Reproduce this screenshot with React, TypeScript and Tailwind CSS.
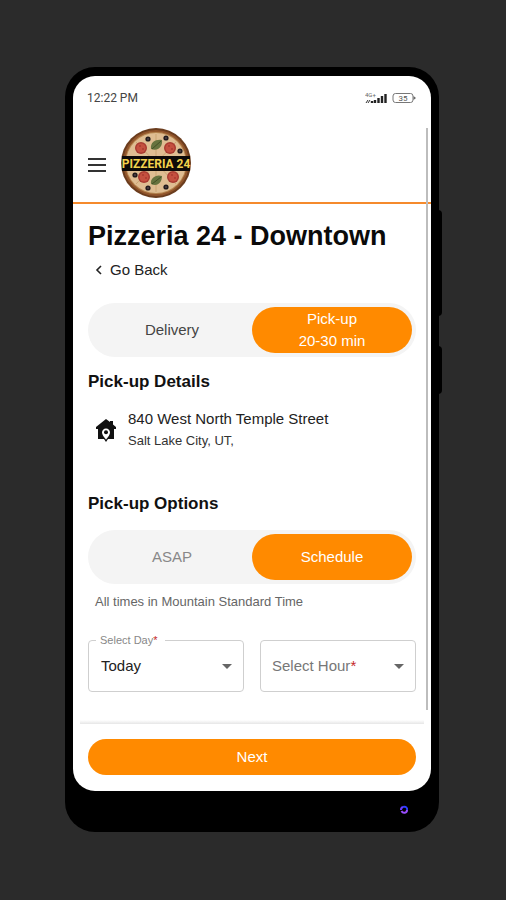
import { useState } from 'react';

const toppings = {
  pepperoni: [[20, 20], [49, 20], [23, 49], [52, 49]],
  olives: [[27, 11], [45, 10], [59, 23], [14, 47], [27, 60], [45, 59]],
};

function PizzaLogo() {
  return (
    <svg viewBox="0 0 70 70" className="w-[70px] h-[70px]" role="img" aria-label="Pizzeria 24">
      <circle cx="35" cy="35" r="35" fill="#6b3d1e" />
      <circle cx="35" cy="35" r="33" fill="#92552b" />
      <circle cx="35" cy="35" r="31" fill="#b5854f" />
      <circle cx="35" cy="35" r="30" fill="#dfbd92" />
      <path d="M35 6V64M15 14L55 56M55 14L15 56" stroke="#cba573" strokeWidth="1" />
      {toppings.pepperoni.map(([x, y]) => (
        <g key={`${x}-${y}`}>
          <circle cx={x} cy={y} r="6" fill="#a83a30" />
          <circle cx={x} cy={y} r="4.6" fill="#c5503f" />
          <circle cx={x - 1} cy={y - 2} r="1" fill="#a83a30" />
          <circle cx={x + 2} cy={y + 1} r="1" fill="#a83a30" />
        </g>
      ))}
      {toppings.olives.map(([x, y]) => (
        <g key={`${x}-${y}`}>
          <circle cx={x} cy={y} r="2.6" fill="#211a1c" />
          <circle cx={x} cy={y} r="0.8" fill="#75606a" />
        </g>
      ))}
      <path d="M30 21C29 14 35 11 41 12C42 18 37 24 30 21Z" fill="#66733f" />
      <path d="M31 21L40 13" stroke="#435026" />
      <path d="M30 56C29 50 35 46 41 48C41 54 37 59 30 56Z" fill="#66733f" />
      <path d="M31 56L40 49" stroke="#435026" />
      <rect x="1" y="28" width="68" height="15" fill="#0d0a08" />
      <text
        x="35"
        y="40"
        textAnchor="middle"
        fill="#f3d24d"
        className="font-[Roboto,sans-serif] font-bold text-[12px]"
      >
        PIZZERIA 24
      </text>
    </svg>
  );
}

function StatusBar() {
  return (
    <div className="flex items-center justify-between pl-[14px] pr-[15px] pt-[14px] text-[#444]">
      <span className="font-[Roboto,sans-serif] text-xs leading-4">12:22 PM</span>
      <div className="flex items-center gap-1">
        <svg viewBox="0 0 23 12" className="w-[23px] h-3" aria-hidden="true">
          <text x="0" y="5" fill="#666" className="font-[Roboto,sans-serif] text-[6px]">4G+</text>
          <path d="M1 11L3 8M3 11L5 8" stroke="#333" />
          <path d="M7 11V9M10 11V8M13.5 11V6M17 11V4M20.5 11V2" stroke="#222" strokeWidth="2.4" />
        </svg>
        <svg viewBox="0 0 24 12" className="w-6 h-3" aria-hidden="true">
          <rect x="1" y="1.5" width="20" height="9" rx="2.5" fill="none" stroke="#777" />
          <path d="M21.5 4L24 6L21.5 8Z" fill="#666" />
          <text x="11" y="9" textAnchor="middle" fill="#555" className="font-[Roboto,sans-serif] text-[8px]">35</text>
        </svg>
      </div>
    </div>
  );
}

interface ToggleProps {
  label: string;
  options: { title: string; detail?: string }[];
  inactiveColor: string;
}

function Toggle({ label, options, inactiveColor }: ToggleProps) {
  const [active, setActive] = useState(1);

  return (
    <div role="group" aria-label={label} className="grid grid-cols-2 rounded-full bg-[#f4f4f4] p-1">
      {options.map((option, i) => (
        <button
          key={option.title}
          type="button"
          aria-pressed={active === i}
          onClick={() => setActive(i)}
          className={`h-[46px] rounded-full text-[15px] leading-[22px] ${active === i ? 'bg-[#ff8a00] text-white' : inactiveColor}`}
        >
          {option.title}
          {option.detail && <span className="block">{option.detail}</span>}
        </button>
      ))}
    </div>
  );
}

function Caret() {
  return (
    <svg viewBox="0 0 10 5" className="pointer-events-none absolute right-3 top-6 w-[10px] h-[5px]" aria-hidden="true">
      <path d="M0 0H10L5 5Z" fill="#666" />
    </svg>
  );
}

function SelectField({ id, label, options }: { id: string; label: string; options: string[] }) {
  const [value, setValue] = useState(options[0]);

  return (
    <div className="relative flex-1 min-w-0">
      <select
        id={id}
        value={value}
        onChange={(e) => setValue(e.target.value)}
        className="block w-full h-[52px] appearance-none rounded-sm border border-[#cfcfcf] bg-white px-3 text-[15px] text-[#222]"
      >
        {options.map((option) => (
          <option key={option} value={option}>{option}</option>
        ))}
      </select>
      <label
        htmlFor={id}
        className={
          value
            ? 'absolute left-2 -top-2 bg-white pl-1 pr-2 text-[11px] leading-4 text-[#888]'
            : 'pointer-events-none absolute left-3 top-4 text-[15px] leading-5 text-[#777]'
        }
      >
        {label}<span className="text-[#c62828]">*</span>
      </label>
      <Caret />
    </div>
  );
}

export default function App() {
  return (
    <div className="min-h-screen bg-[#2b2b2b] pl-[65px] pr-[67px] py-[67px] font-['Liberation_Sans',Arial,sans-serif] text-[#222]">
      {/* Phone body */}
      <div className="relative rounded-[30px] bg-black pt-[9px] px-2 pb-[41px]">
        <div className="absolute -right-[3px] top-[143px] h-[106px] w-2 rounded-r-sm bg-black" />
        <div className="absolute -right-[3px] top-[279px] h-12 w-2 rounded-r-sm bg-black" />

        {/* Screen */}
        <div className="relative overflow-hidden rounded-[22px] bg-white">
          <StatusBar />

          <header className="flex items-center gap-[15px] border-b-2 border-[#f58a2c] pl-[15px] pt-[22px] pb-1">
            <button type="button" aria-label="Menu" className="pt-1">
              <svg viewBox="0 0 18 14" className="w-[18px] h-[14px]" aria-hidden="true">
                <path d="M0 1H18M0 7H18M0 13H18" stroke="#333" strokeWidth="2" />
              </svg>
            </button>
            <PizzaLogo />
          </header>

          <main className="px-[15px] pb-7">
            <h1 className="pt-[14px] text-[27px] leading-9 font-bold text-[#0a0a0a] whitespace-nowrap">Pizzeria 24 - Downtown</h1>
            <a href="#back" className="mt-0.5 ml-[7px] flex w-fit items-center gap-2 py-1 text-[15px] leading-5">
              <svg viewBox="0 0 7 10" className="w-[7px] h-[10px]" aria-hidden="true">
                <path d="M6 1L2 5L6 9" fill="none" stroke="#222" strokeWidth="1.6" />
              </svg>
              Go Back
            </a>

            <div className="mt-[19px]">
              <Toggle
                label="Order type"
                options={[{ title: 'Delivery' }, { title: 'Pick-up', detail: '20-30 min' }]}
                inactiveColor="text-[#444]"
              />
            </div>

            <h2 className="mt-[13px] text-[17px] leading-6 font-bold text-[#111]">Pick-up Details</h2>
            <div className="mt-[14px] flex items-center gap-3 pl-2">
              <svg viewBox="0 0 20 24" className="w-5 h-6" aria-hidden="true">
                <path d="M10 1L0 9V11H2V21H8L10 24L12 21H18V11H20V9L17 6.500V3H14V4Z" fill="#111" />
                <path d="M10 10.500C7.600 10.500 6 12.300 6 14.400C6 17 10 21.500 10 21.500S14 17 14 14.400C14 12.300 12.400 10.500 10 10.500Z" fill="#fff" />
                <circle cx="10" cy="14.300" r="2" fill="#111" />
              </svg>
              <address className="not-italic">
                <p className="text-[15px] leading-[22px]">840 West North Temple Street</p>
                <p className="text-[13px] leading-[22px] text-[#333]">Salt Lake City, UT,</p>
              </address>
            </div>

            <h2 className="mt-10 text-[17px] leading-6 font-bold text-[#111]">Pick-up Options</h2>
            <div className="mt-[14px]">
              <Toggle
                label="Pick-up time"
                options={[{ title: 'ASAP' }, { title: 'Schedule' }]}
                inactiveColor="text-[#888]"
              />
            </div>
            <p className="mt-2 pl-[7px] text-[13px] leading-5 text-[#666]">All times in Mountain Standard Time</p>

            <div className="mt-7 flex gap-4">
              <SelectField id="day" label="Select Day" options={['Today', 'Tomorrow']} />
              <SelectField id="hour" label="Select Hour" options={['', '12:30 PM', '1:00 PM', '1:30 PM']} />
            </div>
          </main>

          <footer className="px-[15px] pb-4">
            <div className="-mx-2 h-1 bg-linear-to-b from-white to-[#e6e6e6]" />
            <button type="button" className="mt-[15px] h-9 w-full rounded-full bg-[#ff8a00] text-[15px] text-white">Next</button>
          </footer>

          {/* Scroll indicator */}
          <div className="absolute right-[3px] top-[52px] bottom-[81px] w-[2px] bg-[#bdbdbd]" />
        </div>

        {/* Maker's mark */}
        <svg viewBox="0 0 10 10" className="absolute right-[30px] bottom-[17px] w-[10px] h-[10px]" aria-hidden="true">
          <path d="M2 5A3 3 0 0 1 4 2" fill="none" stroke="#6a3cff" strokeWidth="2" />
          <path d="M4 2C7 1 8.500 3 8 5" fill="none" stroke="#2d3cff" strokeWidth="2" />
          <path d="M8 5C8 8 4 9 2.500 6" fill="none" stroke="#9a4dff" strokeWidth="2" />
        </svg>
      </div>
    </div>
  );
}
